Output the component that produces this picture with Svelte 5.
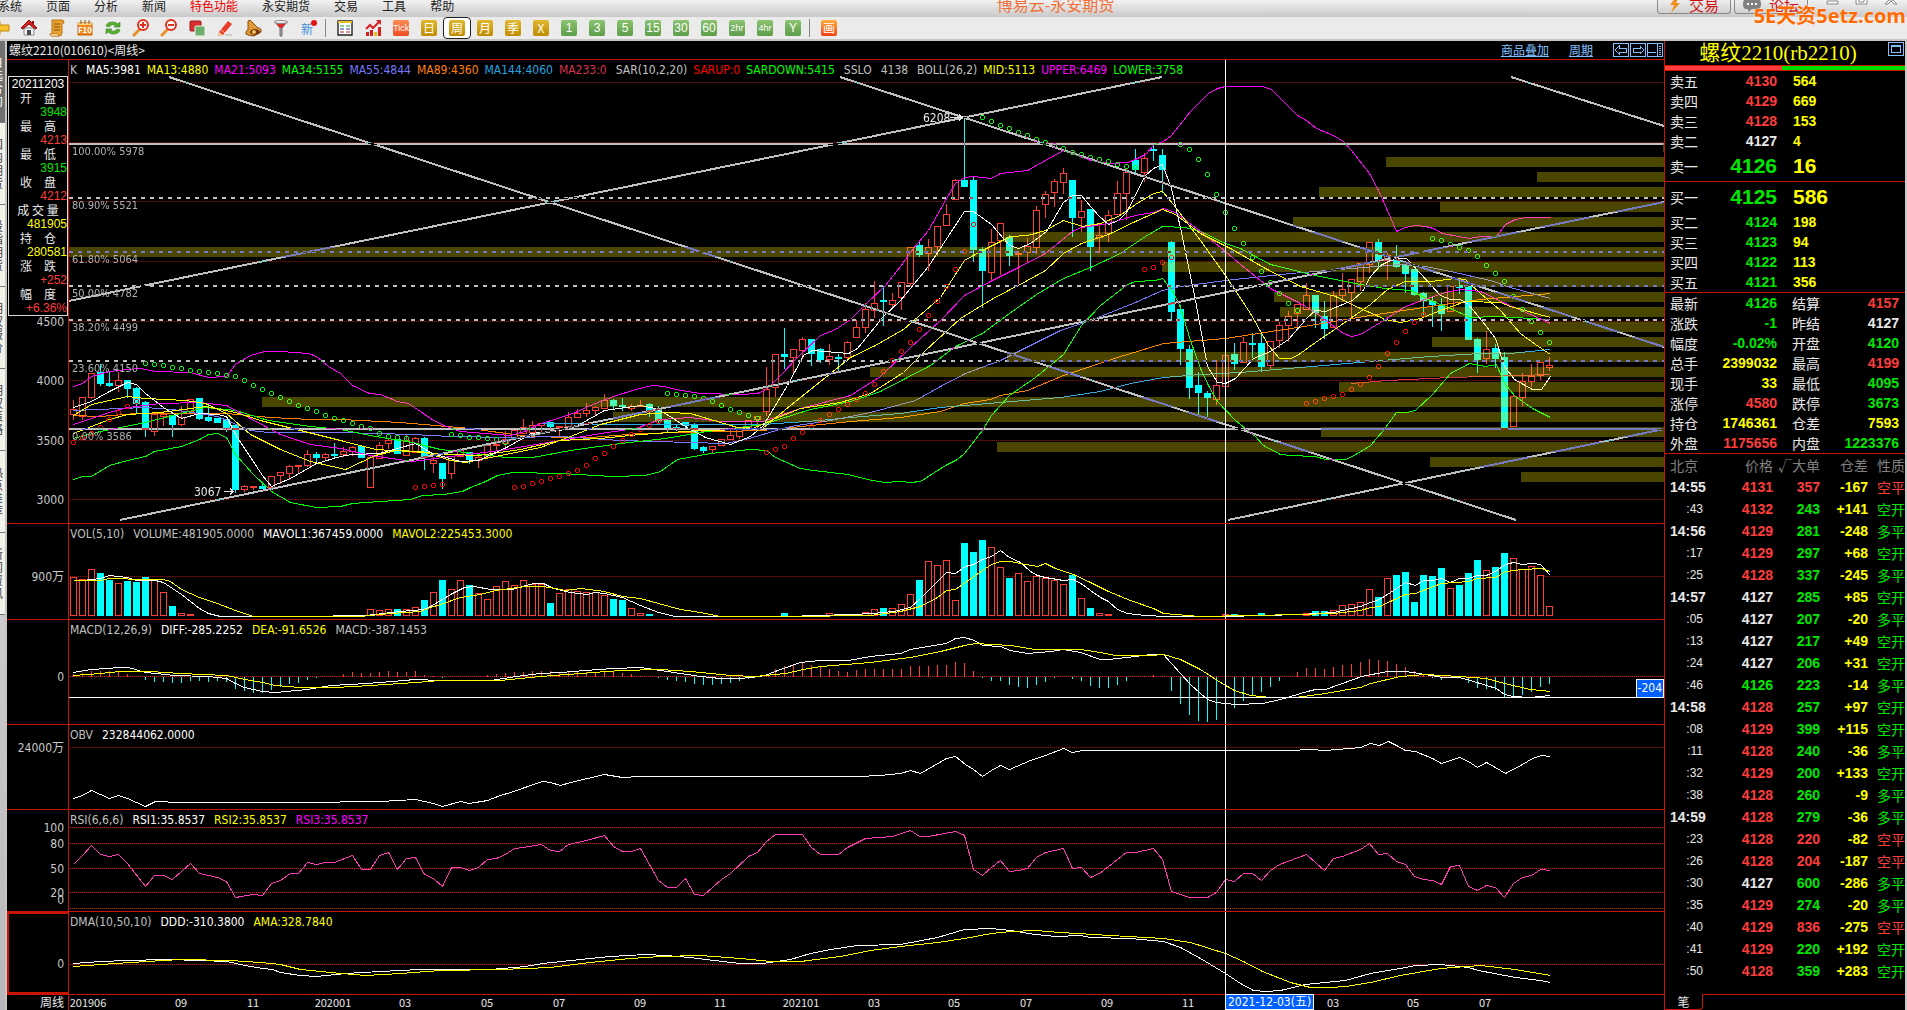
<script lang="ts">
  type Curve = { color: string; points: string };
  type Legend = { text: string; color: string; wide?: boolean };
  type Pane = {
    id: string;
    top: number;
    height: number;
    legend: Legend[];
    ticks: { y: number; text: string }[];
    curves: Curve[];
  };

  const LEFT = 69;
  const WIDTH = 1595;
  const CROSS_X = 1225;
  const barX = (i: number) => 73 + 9 * i;

  const menus = ["系统", "页面", "分析", "新闻", "特色功能", "永安期货", "交易", "工具", "帮助"];
  const tools = ["back", "home", "note", "f10", "refresh", "zoomin", "zoomout", "overlay", "pencil", "bell", "funnel", "new"];
  const periods = [
    { text: "Tick", kind: "red" },
    { text: "日", kind: "gold" },
    { text: "周", kind: "gold" },
    { text: "月", kind: "gold" },
    { text: "季", kind: "gold" },
    { text: "X", kind: "gold" },
    { text: "1", kind: "green" },
    { text: "3", kind: "green" },
    { text: "5", kind: "green" },
    { text: "15", kind: "green" },
    { text: "30", kind: "green" },
    { text: "60", kind: "green" },
    { text: "2hr", kind: "green" },
    { text: "4hr", kind: "green" },
    { text: "Y", kind: "green" },
  ];
  let activePeriod = $state("周");

  const sideTabs = ["自选合约", "国内期货", "股指期货", "期权报价", "期权策略", "热点推荐", "新闻资讯"];

  const info = [
    { label: "开　盘", value: "3948", tone: "down" },
    { label: "最　高", value: "4213", tone: "up" },
    { label: "最　低", value: "3915", tone: "down" },
    { label: "收　盘", value: "4212", tone: "up" },
    { label: "成 交 量", value: "481905", tone: "amount" },
    { label: "持　仓", value: "280581", tone: "amount" },
    { label: "涨　跌", value: "+252", tone: "up" },
    { label: "幅　度", value: "+6.36%", tone: "up" },
  ];

  // direction, high, body top, body bottom, low
  const candles = `u 399 409 414 419,u 397 397 416 419,u 372 373 397 398,d 363 372 383 385,d 370 383 385 386,u 371 380 385 391,
d 379 380 388 397,d 386 388 403 412,d 400 402 429 436,u 413 414 431 435,u 410 414 416 425,d 414 415 424 436,
u 405 417 424 425,u 398 399 411 413,d 398 398 418 419,d 403 417 420 421,d 418 418 422 422,d 419 419 428 431,
d 423 425 489 492,u 484 486 489 491,u 485 486 487 489,d 483 486 488 488,u 475 476 487 489,u 471 472 475 483,
u 464 466 473 479,u 464 465 466 472,u 449 454 465 466,d 451 454 457 463,u 452 454 457 460,d 442 454 455 457,
u 446 451 454 456,u 445 447 451 455,d 446 446 457 457,u 455 457 487 487,u 441 445 458 458,u 438 440 443 448,
d 439 439 453 453,u 434 440 455 455,u 436 438 452 452,d 436 438 457 469,u 456 460 463 472,d 463 463 478 488,
u 456 456 473 478,u 447 450 456 456,d 452 452 459 463,u 455 457 460 467,u 444 445 457 457,u 440 444 445 450,
u 430 439 443 446,u 429 430 438 438,u 418 427 433 433,u 420 425 432 435,u 423 423 425 433,d 421 422 426 428,
u 426 426 427 437,u 411 417 426 426,u 408 413 417 417,u 402 410 413 416,u 405 407 410 415,u 393 400 408 408,
d 398 400 405 408,d 397 405 406 410,u 403 406 408 410,u 399 405 406 406,d 402 404 411 416,d 405 409 420 424,
d 420 420 427 432,d 424 427 428 430,d 422 422 425 427,d 422 424 448 449,d 445 447 450 452,u 446 446 449 452,
u 439 439 445 445,u 429 435 439 439,u 428 428 436 438,u 420 420 430 430,u 416 416 419 429,u 366 389 411 415,
u 354 354 387 396,d 327 354 356 368,u 349 349 357 372,u 336 339 350 358,d 339 339 353 365,d 347 349 359 362,
u 343 356 359 364,d 353 357 358 371,u 340 342 357 359,u 319 327 337 337,u 302 309 327 332,u 280 303 310 317,
d 285 300 301 325,u 292 300 304 308,u 282 282 297 309,u 247 247 283 285,d 240 245 254 256,u 238 247 253 270,
u 226 226 246 255,u 203 214 225 225,u 178 180 199 199,d 118 180 186 186,d 176 180 249 261,d 246 249 270 307,
u 228 242 272 280,u 222 223 240 274,d 234 237 255 265,u 250 253 254 283,u 237 246 252 261,u 205 210 247 253,
u 190 194 204 217,u 178 181 192 206,u 167 173 182 193,d 180 180 217 236,u 199 211 217 231,d 209 209 246 270,
u 223 235 237 252,u 209 215 233 241,u 180 193 214 214,u 168 172 193 219,d 148 160 169 172,u 152 158 172 181,
d 145 149 150 160,d 148 155 169 192,d 240 242 311 320,d 304 309 348 364,d 344 349 387 398,d 371 385 392 415,
d 390 393 397 418,u 359 385 399 404,u 355 355 386 386,d 342 354 363 369,u 336 342 362 362,d 332 343 344 357,
d 332 343 366 371,u 341 341 365 369,u 321 325 340 347,u 310 316 325 341,u 304 304 313 326,u 282 295 309 309,
d 295 295 312 327,d 300 316 328 338,u 290 295 327 327,u 272 289 295 301,u 278 279 292 316,u 263 263 281 290,
u 242 242 264 272,d 238 242 259 268,u 252 255 260 279,d 244 259 266 267,d 263 265 273 292,d 269 269 294 295,
d 291 293 300 314,d 296 301 304 326,d 297 305 313 330,u 285 286 311 311,d 280 285 287 293,d 286 286 339 339,
d 337 339 359 372,u 330 349 358 363,d 343 348 358 367,d 351 357 429 429,u 394 396 426 426,u 372 381 397 405,
u 363 376 381 386,u 361 362 375 379,u 356 365 367 370`
    .split(",")
    .map((row, i) => {
      const [dir, high, top, bottom, low] = row.trim().split(" ");
      return { up: dir === "u", x: barX(i), high: +high, top: +top, bottom: +bottom, low: +low };
    });

  const FLAT_VOLUME = 615;
  const volumeRuns: [number, number[]][] = [
    [0, [577, 579, 569, 573, 580, 583, 581, 582, 577, 580, 592, 606, 613, 614]],
    [33, [609, 610, 609, 609, 609, 607, 600, 592, 580, 589, 580, 585, 593, 599, 586, 581, 585, 580, 584, 584, 603, 593, 589, 591, 592, 592, 595, 599, 600, 608, 613, 614]],
    [79, [613]],
    [84, [613]],
    [88, [612, 609, 608, 608, 604, 594, 580, 561, 565, 560, 600, 543, 552, 540, 547, 567, 578, 573, 581, 576, 578, 580, 584, 575, 598, 608, 613, 614]],
    [128, [614, 614]],
    [132, [613]],
    [137, [613, 611, 611, 610, 605, 604, 602, 589, 597, 578, 575, 572, 602, 575, 576, 568, 588, 585, 573, 560, 570, 567, 553, 558, 569, 566, 575, 606]],
  ];
  const volumes: number[] = candles.map(() => FLAT_VOLUME);
  for (const [start, tops] of volumeRuns) tops.forEach((top, k) => (volumes[start + k] = top));

  const histogram = [
    3, 4, 6, 6, 6, 5, 3, 0, -3, -5, -5, -6, -6, -4, -4, -5, -4, -5, -12, -14, -16, -16, -13, -10, -7, -6, -3, -1, 0, 1,
    3, 5, 4, 4, 5, 6, 5, 5, 6, 2, 1, -1, 0, 0, 0, 1, 2, 3, 4, 5, 5, 6, 6, 6, 5, 6, 5, 5, 5, 6,
    5, 4, 3, 1, 0, -1, -3, -4, -5, -7, -8, -8, -7, -6, -4, -2, 0, 3, 8, 11, 12, 14, 12, 10, 8, 6, 5, 7, 8, 8,
    8, 8, 8, 11, 11, 11, 12, 12, 15, 14, 6, -1, -4, -4, -8, -10, -11, -8, -5, -1, 0, -2, -4, -9, -11, -11, -8, -4, 0, 1,
    2, 1, -14, -27, -38, -44, -45, -43, -36, -31, -24, -18, -15, -10, -4, 0, 5, 9, 9, 8, 10, 12, 13, 15, 18, 17, 16, 13, 10, 6,
    3, -1, -3, -1, -1, -6, -11, -12, -13, -21, -21, -18, -15, -10, -7,
  ];

  const sarRuns: { color: string; start: number; ys: number[] }[] = [
    { color: "#00ff00", start: 8, ys: [363, 364, 365, 367, 368, 370, 371, 372, 373, 375, 376, 380, 385, 389, 393, 397, 401, 405, 408, 411, 415, 418, 420, 423, 426, 428, 433, 436, 437, 438] },
    { color: "#00ff00", start: 42, ys: [434, 435, 437, 437, 438, 439, 442] },
    { color: "#00ff00", start: 66, ys: [393, 394, 395, 396, 398, 401, 405, 409, 412, 415, 418] },
    { color: "#00ff00", start: 101, ys: [117, 121, 125, 128, 132, 135, 139, 142, 145, 148, 152, 154, 157, 159, 161, 164, 166, 167] },
    { color: "#00ff00", start: 123, ys: [144, 149, 159, 174, 194, 212, 228, 243, 257, 271, 282, 293, 303, 310] },
    { color: "#00ff00", start: 151, ys: [238, 240, 244, 247, 250, 256, 265, 273, 281, 296, 309, 321, 332, 342] },
    { color: "#ff0000", start: 0, ys: [442, 437, 433, 427, 419, 412, 406, 401] },
    { color: "#ff0000", start: 38, ys: [487, 486, 485, 484] },
    { color: "#ff0000", start: 49, ys: [487, 486, 483, 481, 478, 476, 473, 470, 465, 458, 453, 446, 440, 434, 429, 425, 421] },
    { color: "#ff0000", start: 77, ys: [452, 449, 446, 438, 432, 426, 420, 414, 409, 404, 399, 393, 384, 371, 360, 351, 342, 329, 315, 301, 286, 269, 251, 224] },
    { color: "#ff0000", start: 119, ys: [269, 267, 262, 257] },
    { color: "#ff0000", start: 137, ys: [403, 401, 398, 396, 394, 389, 384, 377, 366, 353, 342, 331, 322, 314] },
  ];

  // left edge of each price band, top to bottom, one band every 15 units
  const profile = [1663, 1386, 1537, 1319, 1440, 1293, 1003, 69, 1162, 1356, 1274, 1280, 1470, 1432, 1007, 870, 1339, 262, 613, 1321, 997, 1430, 1521];

  const trends = [
    [169, 77, 1516, 520],
    [840, 77, 1664, 347],
    [1511, 77, 1664, 126],
    [69, 301, 1162, 77],
    [120, 520, 1664, 202],
    [1228, 520, 1664, 429],
  ];

  const retracements = [
    { y: 144, text: "100.00% 5978", solid: true },
    { y: 198, text: "80.90% 5521", solid: false },
    { y: 252, text: "61.80% 5064", solid: false },
    { y: 286, text: "50.00% 4782", solid: false },
    { y: 320, text: "38.20% 4499", solid: false },
    { y: 361, text: "23.60% 4150", solid: false },
    { y: 429, text: "0.00% 3586", solid: true },
  ];

  const gridLines: Record<string, number[]> = {
    main: [82, 142, 201, 261, 321, 380, 440, 499],
    vol: [576],
    macd: [676],
    obv: [747],
    rsi: [827, 843, 868, 892, 908],
    dma: [964],
  };

  const panes: Pane[] = [
    {
      id: "main",
      top: 59,
      height: 464,
      legend: [
        { text: "K", color: "#c0c0c0" },
        { text: "MA5:3981", color: "#ffffff", wide: true },
        { text: "MA13:4880", color: "#ffff00" },
        { text: "MA21:5093", color: "#ff00ff" },
        { text: "MA34:5155", color: "#00ff00" },
        { text: "MA55:4844", color: "#7878ff" },
        { text: "MA89:4360", color: "#ff8000" },
        { text: "MA144:4060", color: "#22a6e0" },
        { text: "MA233:0", color: "#d83050" },
        { text: "SAR(10,2,20)", color: "#c0c0c0", wide: true },
        { text: "SARUP:0", color: "#ff0000" },
        { text: "SARDOWN:5415", color: "#00ff00" },
        { text: "SSLO", color: "#c0c0c0", wide: true },
        { text: "4138", color: "#c0c0c0", wide: true },
        { text: "BOLL(26,2)", color: "#c0c0c0", wide: true },
        { text: "MID:5113", color: "#ffff00" },
        { text: "UPPER:6469", color: "#ff00ff" },
        { text: "LOWER:3758", color: "#00ff00" },
      ],
      ticks: [
        { y: 322, text: "4500" },
        { y: 381, text: "4000" },
        { y: 441, text: "3500" },
        { y: 500, text: "3000" },
      ],
      curves: [
        { color: "#ff8000", points: "73,415 100,416 135,413 170,413 226,413 270,417 310,419 340,419 400,422 470,428 520,435 560,437 590,437 640,433 762,430 850,421 900,417 940,411 964,403 990,399 1000,395 1027,390 1063,375 1090,366 1117,357 1150,347 1163,343 1225,338 1310,325 1370,315 1430,306 1480,299 1550,293" },
        { color: "#30a8e0", points: "540,423 640,424 762,424 820,420 850,417 900,413 940,407 1000,402 1060,397 1100,391 1130,383 1163,377 1200,374 1240,372 1300,367 1370,361 1430,356 1480,353 1510,353 1550,349" },
        { color: "#d83050", points: "1351,383 1387,380 1450,377 1520,375 1550,374" },
        { color: "#7878ff", points: "73,410 145,407 172,409 217,416 250,430 268,432 340,432 412,434 450,436 510,437 560,436 620,440 690,442 725,443 745,439 790,426 830,420 870,412 915,400 940,386 965,373 1000,360 1030,345 1060,330 1090,320 1135,302 1162,290 1180,286 1225,280 1290,273 1400,264 1425,266 1450,271 1490,280 1510,287 1550,298" },
        { color: "#00ff00", points: "73,438 100,431 145,422 172,415 205,407 235,410 268,420 310,426 340,429 375,436 412,442 440,449 480,454 506,457 532,457 570,450 620,443 665,438 700,432 762,424 810,409 850,401 880,391 930,365 955,346 982,333 1009,313 1036,294 1063,278 1090,267 1118,254 1145,236 1162,226 1185,227 1200,231 1225,243 1240,248 1270,264 1315,275 1360,284 1385,288 1410,290 1430,300 1450,308 1470,317 1495,316 1550,319" },
        { color: "#ff00ff", points: "73,424 109,412 127,407 160,403 199,402 226,405 250,418 280,434 310,444 340,448 370,455 412,461 450,456 500,450 560,440 600,433 635,428 660,419 690,417 720,421 762,421 800,408 850,395 880,376 910,347 940,320 964,295 990,281 1018,267 1045,253 1072,231 1081,227 1108,223 1135,215 1153,212 1163,208 1175,212 1200,231 1225,251 1240,264 1270,288 1300,303 1315,312 1343,333 1351,336 1360,334 1380,322 1405,306 1430,297 1445,292 1460,289 1480,291 1505,303 1530,314 1550,323" },
        { color: "#ffff00", points: "73,433 109,419 127,414 160,412 205,406 235,412 260,420 300,430 340,440 375,449 410,451 450,454 478,455 520,449 560,440 600,438 640,434 700,430 750,429 775,418 800,408 840,402 870,393 903,372 925,350 960,318 991,299 1027,280 1045,270 1063,253 1081,243 1108,234 1135,221 1162,209 1175,214 1200,233 1230,248 1265,268 1300,286 1335,296 1360,308 1385,319 1400,322 1420,318 1440,310 1465,301 1500,302 1510,306 1550,317" },
        { color: "#ffff00", points: "73,415 91,404 127,396 145,398 185,400 205,403 226,413 250,434 280,449 310,461 345,469 375,455 395,450 422,451 450,460 465,462 490,457 540,447 570,436 600,424 640,414 668,412 690,413 710,419 737,427 762,428 790,405 850,357 875,345 903,329 918,316 940,297 964,260 982,250 1010,236 1027,235 1045,230 1063,220 1082,226 1100,223 1118,216 1135,204 1153,193 1162,191 1173,204 1200,240 1225,275 1250,313 1268,345 1279,358 1290,358 1297,355 1315,342 1340,325 1370,304 1387,289 1405,281 1430,281 1455,278 1465,279 1480,293 1500,310 1520,333 1535,344 1550,354" },
        { color: "#ff00ff", points: "73,386 82,383 91,376 109,371 127,369 140,368 155,371 190,372 208,377 226,376 235,364 250,355 264,351 280,351 308,353 316,356 328,366 340,373 352,385 369,393 380,394 397,401 408,403 420,411 430,418 443,425 460,431 485,433 510,435 524,431 538,424 560,417 575,412 590,405 613,396 635,389 652,385 664,386 675,389 700,393 740,394 757,393 766,389 780,375 796,358 820,335 835,329 850,319 865,304 885,285 900,266 913,248 928,230 945,200 955,183 964,177 973,176 991,178 1000,173 1027,170 1045,160 1063,150 1072,153 1090,160 1110,163 1127,162 1135,159 1145,154 1154,144 1163,141 1171,135 1190,111 1208,93 1217,88 1225,86 1262,86 1271,89 1280,98 1297,115 1306,120 1316,128 1333,135 1343,141 1351,150 1369,173 1378,190 1387,210 1396,231 1405,227 1415,225 1425,226 1433,228 1442,233 1458,236 1469,238 1480,236 1496,236 1505,224 1515,219 1525,217 1550,217" },
        { color: "#00ff00", points: "73,479 82,476 91,476 109,465 127,460 145,456 154,451 181,446 199,439 208,434 217,433 226,437 235,454 253,474 271,491 290,502 316,507 340,506 352,503 380,501 410,499 422,495 443,494 462,491 470,487 483,482 497,475 512,472 560,473 612,476 645,475 660,471 677,459 710,453 750,449 766,450 775,457 800,468 813,470 848,474 867,479 884,482 900,481 910,482 920,481 945,465 957,459 964,453 982,430 991,415 1009,395 1035,377 1063,354 1081,325 1100,305 1127,284 1135,281 1155,280 1162,278 1172,290 1180,307 1190,340 1200,368 1208,385 1217,401 1235,420 1245,428 1255,436 1263,445 1280,454 1290,455 1315,456 1325,459 1345,459 1352,456 1370,445 1383,430 1396,412 1406,412 1415,410 1432,394 1450,373 1469,363 1485,366 1496,364 1504,383 1515,396 1532,408 1550,417" },
        { color: "#ffffff", points: "73,407 91,401 109,391 127,382 136,384 145,393 163,407 181,418 199,413 217,414 226,416 235,434 262,475 271,486 290,478 316,463 340,456 352,454 379,453 415,443 432,453 460,461 478,460 506,447 531,433 560,430 579,424 604,410 640,405 655,408 668,415 685,426 705,437 730,444 750,436 763,425 787,385 803,355 812,350 848,353 857,348 883,316 900,300 928,266 964,211 973,211 991,224 1009,245 1018,248 1030,243 1046,231 1063,202 1072,195 1081,195 1090,206 1099,216 1108,224 1118,220 1126,212 1145,175 1153,168 1162,164 1171,188 1181,232 1195,300 1207,366 1217,382 1225,383 1235,378 1253,358 1270,351 1288,339 1307,317 1315,310 1325,311 1352,300 1362,291 1370,276 1380,265 1390,260 1400,258 1406,258 1420,273 1440,295 1450,299 1460,299 1468,304 1486,326 1495,338 1504,366 1514,379 1532,389 1541,389 1550,376" },
      ],
    },
    {
      id: "vol",
      top: 523,
      height: 96,
      legend: [
        { text: "VOL(5,10)", color: "#c0c0c0" },
        { text: "VOLUME:481905.0000", color: "#c0c0c0" },
        { text: "MAVOL1:367459.0000", color: "#ffffff" },
        { text: "MAVOL2:225453.3000", color: "#ffff00" },
      ],
      ticks: [{ y: 577, text: "900万" }],
      curves: [
        { color: "#ffffff", points: "73,580 82,580 100,578 109,575 127,577 136,580 155,580 163,582 181,594 199,608 208,613 220,616 300,616 365,615 400,611 424,609 432,605 450,594 464,587 474,586 490,589 512,589 525,585 534,583 543,583 553,588 570,592 586,594 595,592 604,593 622,597 640,605 658,612 675,616 785,616 850,614 873,613 893,611 910,607 920,598 937,581 946,572 955,573 965,566 973,564 982,559 991,556 1000,550 1009,557 1020,562 1030,571 1037,575 1045,577 1063,580 1073,579 1082,584 1090,590 1100,597 1108,601 1117,609 1127,613 1145,615 1165,616 1225,616 1300,614 1333,612 1360,606 1370,602 1379,599 1390,592 1405,582 1415,585 1423,580 1432,580 1441,578 1450,582 1459,578 1468,578 1477,575 1486,575 1495,571 1505,564 1513,562 1522,564 1532,563 1540,564 1550,575" },
        { color: "#ffff00", points: "73,580 100,580 109,578 145,579 163,579 170,581 181,589 199,597 217,603 235,610 253,616 360,616 390,613 420,611 430,607 440,604 460,597 480,594 495,590 510,588 525,586 542,586 555,588 565,590 580,588 604,591 622,596 640,598 658,603 680,609 700,612 720,616 790,616 870,615 900,611 920,606 937,597 946,590 955,589 965,582 982,570 991,564 1000,561 1010,561 1025,564 1037,566 1045,563 1055,568 1073,574 1090,582 1108,591 1130,600 1153,608 1163,613 1200,616 1300,614 1333,613 1360,610 1370,607 1379,606 1405,594 1415,593 1441,583 1468,581 1477,578 1495,577 1505,571 1522,569 1541,568 1550,571" },
      ],
    },
    {
      id: "macd",
      top: 619,
      height: 105,
      legend: [
        { text: "MACD(12,26,9)", color: "#c0c0c0" },
        { text: "DIFF:-285.2252", color: "#ffffff" },
        { text: "DEA:-91.6526", color: "#ffff00" },
        { text: "MACD:-387.1453", color: "#c0c0c0" },
      ],
      ticks: [{ y: 677, text: "0" }],
      curves: [
        { color: "#ffffff", points: "73,672 91,669 120,667 128,667 145,672 165,674 173,675 208,676 226,678 235,683 244,687 262,691 275,692 307,689 330,685 350,684 380,682 415,679 440,680 490,680 516,676 540,673 560,672 585,670 613,668 640,667 660,670 680,673 700,676 720,678 740,678 760,676 767,674 780,669 800,662 820,660 848,660 870,656 900,653 910,649 928,646 946,643 955,638 964,637 974,640 982,645 1000,646 1010,650 1027,653 1050,651 1063,649 1080,652 1100,659 1108,659 1135,656 1150,654 1163,654 1171,663 1190,684 1200,693 1207,699 1216,702 1235,704 1262,703 1280,699 1307,691 1315,689 1325,689 1342,683 1361,676 1387,671 1405,671 1425,674 1442,677 1459,677 1470,680 1486,685 1496,688 1504,694 1513,696 1530,697 1550,695" },
        { color: "#ffff00", points: "73,675 100,673 120,671 150,671 180,673 226,675 245,679 262,682 275,685 300,687 335,687 370,685 415,682 440,680 500,680 540,676 580,673 620,670 660,669 690,671 700,672 730,675 755,676 785,673 803,669 820,666 870,662 910,657 940,651 964,645 975,643 1010,645 1035,649 1080,649 1100,652 1115,655 1150,655 1163,654 1180,659 1200,669 1220,682 1234,690 1250,695 1270,697 1295,697 1325,693 1342,690 1360,687 1370,683 1400,676 1425,674 1459,676 1486,678 1504,683 1530,689 1550,691" },
      ],
    },
    {
      id: "obv",
      top: 724,
      height: 85,
      legend: [
        { text: "OBV", color: "#c0c0c0" },
        { text: "232844062.0000", color: "#ffffff" },
      ],
      ticks: [{ y: 748, text: "24000万" }],
      curves: [
        { color: "#ffffff", points: "73,798 82,795 91,790 109,798 118,795 127,798 145,806 155,801 180,802 300,802 380,801 415,799 433,803 442,806 460,801 469,803 487,800 500,795 510,792 542,781 550,782 560,785 570,782 604,774 622,777 640,776 857,776 880,775 900,773 910,770 920,773 946,758 955,756 965,764 973,769 982,776 991,770 1000,765 1009,769 1030,760 1045,755 1063,748 1072,752 1082,750 1225,750 1290,750 1310,749 1325,750 1360,747 1370,743 1379,745 1388,741 1396,745 1405,750 1415,751 1432,758 1441,763 1459,757 1468,761 1477,767 1486,762 1495,767 1505,773 1522,764 1532,758 1541,755 1550,756" },
      ],
    },
    {
      id: "rsi",
      top: 809,
      height: 102,
      legend: [
        { text: "RSI(6,6,6)", color: "#c0c0c0" },
        { text: "RSI1:35.8537", color: "#ffffff" },
        { text: "RSI2:35.8537", color: "#ffff00" },
        { text: "RSI3:35.8537", color: "#ff00ff" },
      ],
      ticks: [
        { y: 828, text: "100" },
        { y: 844, text: "80" },
        { y: 869, text: "50" },
        { y: 893, text: "20" },
        { y: 900, text: "0" },
      ],
      curves: [
        { color: "#ff3cb4", points: "73,864 82,855 91,845 100,854 109,856 118,854 127,863 145,886 154,875 163,875 172,879 190,863 199,873 208,875 217,877 226,881 235,897 253,894 262,895 271,883 280,880 290,873 298,873 307,862 316,864 325,862 334,862 352,855 361,869 370,869 379,855 388,852 397,869 406,858 415,857 424,874 433,878 442,886 451,867 460,867 469,870 478,867 487,859 496,858 505,854 514,848 523,847 541,844 550,850 559,851 568,844 586,840 604,835 613,846 622,851 631,851 640,848 658,880 667,887 676,887 685,878 694,894 703,895 721,879 730,873 748,856 757,852 766,841 775,834 802,834 811,847 820,854 838,854 847,847 865,838 892,836 910,830 919,836 928,836 955,831 964,835 973,869 982,875 991,867 1000,860 1009,871 1018,870 1027,868 1036,857 1045,852 1063,848 1072,868 1081,867 1090,877 1099,873 1117,859 1126,852 1135,852 1153,848 1162,859 1171,891 1189,897 1207,897 1216,892 1225,879 1234,881 1243,873 1252,873 1261,880 1270,870 1279,864 1306,854 1324,870 1333,858 1342,856 1360,849 1369,843 1378,854 1387,853 1396,861 1405,864 1414,876 1423,879 1432,880 1441,884 1450,866 1459,865 1468,886 1477,890 1486,885 1495,887 1504,897 1513,883 1522,877 1531,875 1540,869 1550,870" },
      ],
    },
    {
      id: "dma",
      top: 911,
      height: 83,
      legend: [
        { text: "DMA(10,50,10)", color: "#c0c0c0" },
        { text: "DDD:-310.3800", color: "#ffffff" },
        { text: "AMA:328.7840", color: "#ffff00" },
      ],
      ticks: [{ y: 965, text: "0" }],
      curves: [
        { color: "#ffffff", points: "73,963 100,961 127,960 165,959 200,960 226,961 245,965 262,968 272,969 280,972 300,975 316,976 345,973 380,971 420,969 490,969 525,966 542,963 580,959 610,956 645,954 665,955 690,957 705,959 740,963 762,963 790,959 810,953 830,949 857,945 900,944 937,937 964,929 991,928 1010,930 1035,934 1055,936 1080,935 1090,937 1130,938 1163,941 1180,947 1200,958 1225,973 1240,983 1253,990 1265,991 1280,990 1305,984 1345,980 1370,973 1400,968 1415,965 1440,964 1468,967 1478,970 1515,977 1540,980 1550,982" },
        { color: "#ffff00", points: "73,966 100,964 130,962 180,959 230,960 260,962 280,964 300,969 330,972 365,975 400,973 440,970 500,969 550,967 590,962 630,958 660,956 700,955 740,958 770,961 800,961 840,956 870,950 900,946 937,942 964,938 991,933 1010,931 1035,930 1060,932 1110,935 1163,938 1190,942 1225,953 1243,961 1262,971 1290,982 1310,987 1330,987 1345,986 1370,982 1400,975 1440,968 1480,965 1515,969 1550,975" },
      ],
    },
  ];

  const dates = [
    { x: 88, text: "201906" }, { x: 181, text: "09" }, { x: 253, text: "11" }, { x: 333, text: "202001" },
    { x: 405, text: "03" }, { x: 487, text: "05" }, { x: 559, text: "07" }, { x: 640, text: "09" },
    { x: 720, text: "11" }, { x: 801, text: "202101" }, { x: 874, text: "03" }, { x: 954, text: "05" },
    { x: 1026, text: "07" }, { x: 1107, text: "09" }, { x: 1188, text: "11" }, { x: 1333, text: "03" },
    { x: 1413, text: "05" }, { x: 1485, text: "07" },
  ];

  const asks = [["卖五", 4130, 564], ["卖四", 4129, 669], ["卖三", 4128, 153], ["卖二", 4127, 4], ["卖一", 4126, 16]] as const;
  const bids = [["买一", 4125, 586], ["买二", 4124, 198], ["买三", 4123, 94], ["买四", 4122, 113], ["买五", 4121, 356]] as const;

  const stats = [
    ["最新", "4126", "down", "结算", "4157", "up"],
    ["涨跌", "-1", "down", "昨结", "4127", "flat"],
    ["幅度", "-0.02%", "down", "开盘", "4120", "down"],
    ["总手", "2399032", "amount", "最高", "4199", "up"],
    ["现手", "33", "amount", "最低", "4095", "down"],
    ["涨停", "4580", "up", "跌停", "3673", "down"],
    ["持仓", "1746361", "amount", "仓差", "7593", "amount"],
    ["外盘", "1175656", "up", "内盘", "1223376", "down"],
  ];

  const trades: [string, number, number, string, string][] = [
    ["14:55", 4131, 357, "-167", "空平"],
    [":43", 4132, 243, "+141", "空开"],
    ["14:56", 4129, 281, "-248", "多平"],
    [":17", 4129, 297, "+68", "空开"],
    [":25", 4128, 337, "-245", "多平"],
    ["14:57", 4127, 285, "+85", "空开"],
    [":05", 4127, 207, "-20", "多平"],
    [":13", 4127, 217, "+49", "空开"],
    [":24", 4127, 206, "+31", "空开"],
    [":46", 4126, 223, "-14", "多平"],
    ["14:58", 4128, 257, "+97", "空开"],
    [":08", 4129, 399, "+115", "空开"],
    [":11", 4128, 240, "-36", "多平"],
    [":32", 4129, 200, "+133", "空开"],
    [":38", 4128, 260, "-9", "多平"],
    ["14:59", 4128, 279, "-36", "多平"],
    [":23", 4128, 220, "-82", "空平"],
    [":26", 4128, 204, "-187", "空平"],
    [":30", 4127, 600, "-286", "多平"],
    [":35", 4129, 274, "-20", "多平"],
    [":40", 4129, 836, "-275", "空平"],
    [":41", 4129, 220, "+192", "空开"],
    [":50", 4128, 359, "+283", "空开"],
  ];

  const PREV_SETTLE = 4127;
  function tone(price: number): string {
    if (price === PREV_SETTLE) return "flat";
    return price > PREV_SETTLE ? "up" : "down";
  }

  function percent(value: number, start: number, size: number): string {
    return `${((value - start) / size) * 100}%`;
  }
</script>

{#snippet toolIcon(name: string)}
  <svg class="icon" viewBox="0 0 18 18" width="18" height="18" aria-hidden="true">
    {#if name === "back"}
      <path d="M1 9 8 2v4h9v6H8v4z" fill="#f7c331" stroke="#c8860a" />
    {:else if name === "home"}
      <path d="M4 9h10v7H4z" fill="#f4f4f4" stroke="#888" />
      <path d="M12 2h2v4h-2z" fill="#a01010" />
      <path d="M9 1 1 9l2 1 6-5 6 5 2-1z" fill="#d42020" stroke="#8c1010" />
      <path d="M7 11h4v5H7z" fill="#4a4a4a" />
    {:else if name === "note"}
      <path d="M4 1h10q2 0 2 3h-2v10q0 3-3 3H4q-2 0-2-2h2z" fill="#e8a030" stroke="#b87410" />
      <path d="M6 5h6M6 8h6M6 11h6" stroke="#8c5408" />
      <path d="M2 15h8q0 2 1 2H4q-2 0-2-2z" fill="#fff0c8" stroke="#b87410" stroke-width=".6" />
    {:else if name === "f10"}
      <path d="M2 4h14v12H2z" fill="#f08a1c" stroke="#c06008" />
      <path d="M2 4h14v2H2z" fill="#ffd080" />
      <path d="M5 1v4M9 1v4M13 1v4" stroke="#886020" />
      <text x="9" y="14" text-anchor="middle" font-size="8" font-weight="bold" fill="#fff">F10</text>
    {:else if name === "refresh"}
      <path d="M2 7q1-4 7-4 3 0 5 2l2-2v5h-6l2-1q-4-3-7 1z" fill="#58b030" stroke="#2f7d18" stroke-width=".6" />
      <path d="M16 11q-1 4-7 4-3 0-5-2l-2 2v-5h6l-2 1q4 3 7-1z" fill="#58b030" stroke="#2f7d18" stroke-width=".6" />
    {:else if name === "zoomin" || name === "zoomout"}
      <path d="m8 10-6 6" stroke="#e8902c" stroke-width="3" stroke-linecap="round" />
      <circle cx="11" cy="6" r="5" fill="#fff" stroke="#e03020" stroke-width="2" />
      <path d="M8 6h6" stroke="#e03020" stroke-width="2" />
      {#if name === "zoomin"}<path d="M11 3v6" stroke="#e03020" stroke-width="2" />{/if}
    {:else if name === "overlay"}
      <rect x="2" y="2" width="11" height="10" rx="1" fill="#d83030" stroke="#a01818" />
      <rect x="7" y="7" width="10" height="10" rx="1" fill="#6cae6c" stroke="#e8f4e8" />
    {:else if name === "pencil"}
      <path d="m3 13 9-11 4 3-9 11-5 1z" fill="#e83c28" />
      <path d="m5 11 4 3" stroke="#ffb0a0" />
      <path d="m3 13 4 3-5 1z" fill="#f8d8a0" />
      <path d="M9 16h7" stroke="#aaa" />
    {:else if name === "bell"}
      <path d="M4 2q3-2 4 1l6 6q4 0 3 4l-7 4q-5 0-8-2-1-3 2-4z" fill="#e09a38" stroke="#8a4c10" />
      <ellipse cx="11" cy="13" rx="5" ry="3" fill="#7a3c0c" />
      <circle cx="10" cy="13" r="2" fill="#f4c060" />
    {:else if name === "funnel"}
      <path d="M3 3h12l-5 6v8H8V9z" fill="#a8a8a8" stroke="#686868" />
      <path d="M4 4h10l-4 5H8z" fill="#e02828" />
      <ellipse cx="9" cy="3" rx="7" ry="1.5" fill="#f0f0f0" stroke="#888" />
    {:else if name === "new"}
      <text x="7" y="15" text-anchor="middle" font-size="12" fill="#3c8ce0">新</text>
      <circle cx="14" cy="4" r="3" fill="#e81010" />
    {:else if name === "quote"}
      <path d="M2 2h14v14H2z" fill="#fff" stroke="#222" stroke-width="1.4" />
      <path d="M2 2h14v2H2z" fill="#e8c020" />
      <path d="M4 7h4M10 7h4" stroke="#20a020" />
      <path d="M4 10h4M10 10h4" stroke="#303090" />
      <path d="M4 13h4M10 13h4" stroke="#c02020" />
    {:else if name === "chart"}
      <path d="M2 17v-4h3v4zM6 17v-6h3v6zM14 17V8h3v9z" fill="#d82020" />
      <path d="M10 17v-4h3v4z" fill="#e8c020" />
      <path d="m2 10 4-4 3 3 7-7" fill="none" stroke="#d82020" stroke-width="2" />
      <path d="M12 1h5v5z" fill="#d82020" />
    {/if}
  </svg>
{/snippet}

{#snippet quoteRows(rows: readonly (readonly [string, number, number])[], best: string)}
  <table class="book">
    <tbody>
      {#each rows as [label, price, size] (label)}
        <tr class:best={label === best}>
          <th scope="row">{label}</th>
          <td class="num {tone(price)}">{price}</td>
          <td class="size amount">{size}</td>
        </tr>
      {/each}
    </tbody>
  </table>
{/snippet}

<div class="terminal">
  <header class="menubar">
    <nav class="menus" aria-label="主菜单">
      {#each menus as item (item)}
        <button type="button" class:hot={item === "特色功能"}>{item}</button>
      {/each}
    </nav>
    <span class="app-title">博易云-永安期货</span>
    <button type="button" class="head-btn">
      <svg viewBox="0 0 12 16" width="12" height="16" aria-hidden="true"><path d="M7 0 1 8h4l-3 8 9-10H7l3-6z" fill="#f0901c" /></svg>
      交易
    </button>
    <button type="button" class="head-btn">
      <svg viewBox="0 0 18 14" width="18" height="14" aria-hidden="true">
        <path d="M3 1h12q3 0 3 5t-3 5H9l-4 3v-3H3q-3 0-3-5t3-5z" fill="#808080" />
        <path d="M4 6h2M8 6h2M12 6h2" stroke="#fff" stroke-width="2" />
      </svg>
      论坛
    </button>
    <div class="window-btns">
      <button type="button" aria-label="最小化"><svg viewBox="0 0 14 10" width="14" height="10"><path d="M1 1h11v3H1z" fill="#fff" stroke="#888" /></svg></button>
      <button type="button" aria-label="还原"><svg viewBox="0 0 14 10" width="14" height="10"><path d="M1 0v4h11V0M4 0v2h5V0" fill="#fff" stroke="#888" /></svg></button>
      <button type="button" aria-label="关闭"><svg viewBox="0 0 14 10" width="14" height="10"><path d="M1 4h3l3-3 3 3h3L9 0H5z" fill="#fff" stroke="#888" /></svg></button>
    </div>
    <span class="brand">5E天资5etz.com</span>
  </header>

  <div class="toolbar">
    {#each tools as tool (tool)}
      <button type="button" class="tool" aria-label={tool}>{@render toolIcon(tool)}</button>
    {/each}
    <span class="sep"></span>
    <button type="button" class="tool" aria-label="quote">{@render toolIcon("quote")}</button>
    <button type="button" class="tool" aria-label="chart">{@render toolIcon("chart")}</button>
    {#each periods as period (period.text)}
      <button type="button" class="tool" class:active={activePeriod === period.text} onclick={() => (activePeriod = period.text)}>
        <span class="chip {period.kind}" class:small={period.text.length > 2}>{period.text}</span>
      </button>
    {/each}
    <span class="sep"></span>
    <button type="button" class="tool"><span class="chip paint">画</span></button>
  </div>

  <div class="workspace">
    <nav class="side-tabs" aria-label="板块">
      {#each sideTabs as tab, i (tab)}
        <button type="button" class:current={i === 0}><span>{tab}</span></button>
      {/each}
    </nav>

    <main class="chart">
      <div class="chart-head">
        <span>螺纹2210(010610)&lt;周线&gt;</span>
        <div class="chart-links">
          <a href="#overlay">商品叠加</a>
          <a href="#period">周期</a>
          <div class="chart-btns">
            <button type="button" aria-label="左移"><svg viewBox="0 0 14 12" width="14" height="12"><path d="m1 6 4-4v2h7v4H5v2z" /></svg></button>
            <button type="button" aria-label="右移"><svg viewBox="0 0 14 12" width="14" height="12"><path d="M13 6 9 2v2H2v4h7v2z" /></svg></button>
            <button type="button" aria-label="布局"><svg viewBox="0 0 14 12" width="14" height="12"><path d="M0 8h8M9 0v12M11 2h2M11 4h2M11 6h2M11 8h2M11 10h2" /></svg></button>
          </div>
        </div>
      </div>

      {#each panes as pane (pane.id)}
        <section class="pane" style:flex-grow={pane.height - 1}>
          <div class="axis" class:selected={pane.id === "dma"}>
            {#if pane.id === "main"}
              <dl class="info">
                <div class="info-date">20211203</div>
                {#each info as row (row.label)}
                  <dt>{row.label}</dt>
                  <dd class={row.tone}>{row.value}</dd>
                {/each}
              </dl>
            {/if}
            {#each pane.ticks as tick (tick.text)}
              <span class="tick" style:top={percent(tick.y, pane.top + 1, pane.height - 1)}>{tick.text}</span>
            {/each}
          </div>
          <div class="plot">
            <svg viewBox="{LEFT} {pane.top + 1} {WIDTH} {pane.height - 1}" preserveAspectRatio="none" aria-hidden="true">
              <g transform="translate(0.5 0.5)">
                {#each gridLines[pane.id] as y (y)}
                  <path class="grid" class:bright={pane.id !== "main" && pane.id !== "vol" && pane.id !== "obv"} d="M{LEFT} {y}H1664" />
                {/each}

                {#if pane.id === "main"}
                  {#each candles as c (c.x)}
                    <g class={c.up ? "rise" : "fall"}>
                      <path d="M{c.x} {c.high}V{c.top}M{c.x} {c.bottom}V{c.low}" />
                      <rect x={c.x - 3} y={c.top} width="6" height={c.bottom - c.top} />
                    </g>
                  {/each}
                {:else if pane.id === "vol"}
                  {#each candles as c, i (c.x)}
                    <rect class={c.up ? "rise" : "fall"} x={c.x - 3} y={volumes[i]} width="6" height={615 - volumes[i]} />
                  {/each}
                {:else if pane.id === "macd"}
                  {#each histogram as value, i (i)}
                    {#if value !== 0}
                      <path class={value > 0 ? "rise" : "fall"} d="M{barX(i)} 676V{676 - value}" />
                    {/if}
                  {/each}
                {/if}

                {#each pane.curves as curve (curve.points)}
                  <polyline class="curve" points={curve.points} stroke={curve.color} />
                {/each}

                {#if pane.id === "main"}
                  {#each sarRuns as run (run.color + run.start)}
                    {#each run.ys as y, k (k)}
                      <circle cx={barX(run.start + k)} cy={y} r="2" stroke={run.color} />
                    {/each}
                  {/each}
                {/if}
              </g>

              {#if pane.id === "main"}
                <g class="profile">
                  {#each profile as x, i (i)}
                    <rect {x} y={142 + 15 * i} width={1664 - x} height="10" />
                  {/each}
                </g>
                <g class="drawings">
                  {#each retracements as line (line.y)}
                    <path class:dashed={!line.solid} d="M{LEFT} {line.y}H1664" />
                  {/each}
                  {#each trends as [x1, y1, x2, y2] (x1 + y1)}
                    <path d="M{x1} {y1}L{x2} {y2}" />
                  {/each}
                </g>
                {#each retracements as line (line.y)}
                  <text class="level" x="72" y={line.y + 11}>{line.text}</text>
                {/each}
                <text class="extreme" x="194" y="496">3067</text>
                <path class="pointer" d="M224 491.5h9M230 488.5l3 3-3 3" />
                <text class="extreme" x="923" y="122">6208</text>
                <path class="pointer" d="M950 117.5h12M959 114.5l3 3-3 3" />
              {:else if pane.id === "macd"}
                <path class="cross" d="M{LEFT} 697.5H1664" />
              {/if}
              <path class="cross" d="M{CROSS_X + 0.5} {pane.top}v{pane.height}" />
            </svg>
            <div class="legend" class:dense={pane.id === "main"}>
              {#each pane.legend as item (item.text)}
                <span class:wide={item.wide} style:color={item.color}>{item.text}</span>
              {/each}
            </div>
            {#if pane.id === "macd"}
              <output class="value-tag">-204</output>
            {/if}
          </div>
        </section>
      {/each}

      <footer class="date-row">
        <span class="period-name">周线</span>
        <div class="dates">
          {#each dates as date (date.x)}
            <span style:left={percent(date.x, LEFT, WIDTH)}>{date.text}</span>
          {/each}
          <output style:left={percent(CROSS_X, LEFT, WIDTH)}>2021-12-03(五)</output>
        </div>
      </footer>
    </main>

    <aside class="quote">
      <h1>
        螺纹2210(rb2210)
        <button type="button" aria-label="最大化"><svg viewBox="0 0 16 14" width="16" height="14"><path d="M.5.5h15v13H.5zM3.5 3.5h9v7h-9zM3.5 4.5h9" /></svg></button>
      </h1>
      <div class="ratio"><span></span><span></span></div>
      {@render quoteRows(asks, "卖一")}
      {@render quoteRows(bids, "买一")}

      <table class="stats">
        <tbody>
          {#each stats as [l1, v1, t1, l2, v2, t2] (l1)}
            <tr>
              <th scope="row">{l1}</th>
              <td class={t1}>{v1}</td>
              <th scope="row">{l2}</th>
              <td class={t2}>{v2}</td>
            </tr>
          {/each}
        </tbody>
      </table>

      <table class="trades">
        <thead>
          <tr><th scope="col">北京</th><th scope="col">价格</th><th scope="col">√大单</th><th scope="col">仓差</th><th scope="col">性质</th></tr>
        </thead>
        <tbody>
          {#each trades as [time, price, size, change, kind], i (i)}
            {@const side = kind === "空平" ? "up" : "down"}
            <tr>
              <td class:second={time.startsWith(":")}>{time}</td>
              <td class={tone(price)}>{price}</td>
              <td class={side}>{size}</td>
              <td class="amount">{change}</td>
              <td class={side}>{kind}</td>
            </tr>
          {/each}
        </tbody>
      </table>

      <div class="bottom-tabs"><button type="button">笔</button></div>
    </aside>
  </div>
</div>

<style>
  :global(body) {
    margin: 0;
    background: #000;
    overflow: hidden;
  }

  .terminal {
    --red: #c81400;
    --tahoma: "DejaVu Sans Condensed", "Noto Sans", "Noto Sans CJK SC", sans-serif;
    display: flex;
    flex-direction: column;
    height: 100vh;
    min-height: 900px;
    background: #000;
    color: #e8e8e8;
    font: 12px/14px "Noto Sans CJK SC", sans-serif;
  }

  button {
    margin: 0;
    padding: 0;
    border: 0;
    background: none;
    color: inherit;
    font: inherit;
    cursor: pointer;
  }

  .menubar {
    position: relative;
    display: flex;
    height: 17px;
    flex: none;
    overflow: visible;
    background: linear-gradient(#f2f2f2, #c9c9c9);
    color: #222;
  }

  .menus {
    display: flex;
    gap: 24px;
    height: 17px;
    margin-left: -2px;
  }

  .menus button {
    height: 11px;
    line-height: 11px;
    white-space: nowrap;
  }

  .menus .hot {
    color: #f00000;
  }

  .app-title {
    margin: 0 auto;
    color: #f07038;
    font-size: 16px;
    line-height: 9px;
  }

  .head-btn {
    display: flex;
    align-items: center;
    justify-content: center;
    gap: 8px;
    width: 74px;
    height: 14px;
    margin-right: 3px;
    padding-bottom: 3px;
    box-sizing: border-box;
    border: 1px solid #888;
    border-top: 0;
    border-radius: 0 0 4px 4px;
    background: linear-gradient(#eee, #d0d0d0);
    color: #d01010;
    font-size: 15px;
    line-height: 10px;
    overflow: hidden;
  }

  .window-btns {
    display: flex;
    gap: 15px;
    margin: 0 9px 0 15px;
    align-items: flex-start;
  }

  .window-btns svg {
    display: block;
  }

  .brand {
    position: absolute;
    top: 4px;
    right: 1px;
    z-index: 1;
    color: #ff6a00;
    font: bold 20px/24px "Open Sans", "Noto Sans CJK SC", sans-serif;
    text-shadow: 0 0 2px #fff;
  }

  .toolbar {
    display: flex;
    align-items: center;
    height: 22px;
    flex: none;
    border-bottom: 2px solid #c8c4c0;
    background: #ebebeb;
  }

  .tool {
    display: flex;
    align-items: center;
    justify-content: center;
    width: 28px;
    height: 22px;
    flex: none;
    box-sizing: border-box;
  }

  .tool:first-child {
    margin-left: -13px;
  }

  .tool.active {
    border: 1px solid #222;
    border-radius: 4px;
    background: #fff;
  }

  .icon {
    display: block;
  }

  .sep {
    width: 8px;
    height: 18px;
    box-sizing: border-box;
    background: linear-gradient(#888, #888) 2px 0 / 1px 100% no-repeat;
  }

  .chip {
    width: 16px;
    height: 16px;
    border-radius: 2px;
    color: #fff;
    font-size: 12px;
    line-height: 15px;
    text-align: center;
    overflow: hidden;
  }

  .chip.red {
    background: linear-gradient(#ff8a50, #f04c20);
    font: 12px/16px "Liberation Sans", sans-serif;
  }

  .chip.gold {
    background: linear-gradient(#e0b830, #c08c00);
  }

  .chip.green {
    background: linear-gradient(#8cc470, #5c9c48);
    font: 12px/16px "Liberation Sans", sans-serif;
  }

  .chip.small {
    font-size: 9px;
  }

  .chip.paint {
    background: linear-gradient(#ffb040, #f04010);
  }

  .workspace {
    display: flex;
    flex: 1;
    min-height: 0;
    border-right: 2px solid #c8c8c8;
  }

  .side-tabs {
    width: 7px;
    flex: none;
    box-sizing: border-box;
    border-right: 2px solid #c8c4c0;
    background: linear-gradient(#e8e8e8, #b8b8bc);
    overflow: hidden;
  }

  .side-tabs button {
    display: flex;
    justify-content: flex-end;
    width: 5px;
    height: 82px;
    padding: 14px 2px 0 0;
    box-sizing: border-box;
    border-bottom: 1px solid #777;
    background: #f2f1ea;
    color: #444;
    overflow: hidden;
  }

  .side-tabs .current {
    background: #707070;
    color: #fff;
  }

  .side-tabs span {
    width: 12px;
    flex: none;
    height: 52px;
    line-height: 13px;
    word-break: break-all;
    white-space: normal;
  }

  .chart {
    display: flex;
    flex: 1;
    flex-direction: column;
    min-width: 0;
    border-right: 1px solid var(--red);
  }

  .chart-head {
    display: flex;
    align-items: center;
    justify-content: space-between;
    height: 18px;
    flex: none;
    padding: 0 1px 0 2px;
  }

  .chart-links {
    display: flex;
    align-items: center;
    gap: 20px;
  }

  .chart-links a {
    color: #80c0ff;
  }

  .chart-btns {
    display: flex;
    gap: 1px;
  }

  .chart-btns button {
    width: 16px;
    height: 14px;
    box-sizing: border-box;
    border: 1px solid #80c0ff;
  }

  .chart-btns svg,
  h1 svg {
    display: block;
    fill: none;
    stroke: #80c0ff;
    shape-rendering: crispEdges;
  }

  .pane {
    display: flex;
    flex-shrink: 0;
    flex-basis: 0;
    min-height: 0;
    box-sizing: border-box;
    border-top: 1px solid var(--red);
  }

  .axis {
    position: relative;
    width: 62px;
    flex: none;
    box-sizing: border-box;
    border-right: 1px solid var(--red);
  }

  .axis.selected {
    border: 2px solid var(--red);
    border-right-width: 1px;
  }

  .tick {
    position: absolute;
    right: 4px;
    margin-top: -7px;
    color: #c8c8c8;
    font-family: var(--tahoma);
    line-height: 14px;
  }

  .info {
    width: 60px;
    margin: 16px 0 0 1px;
    box-sizing: border-box;
    border: 1px solid #d8d8d8;
    line-height: 14px;
    text-align: center;
  }

  .info-date {
    font-family: "Liberation Sans", sans-serif;
    color: #fff;
  }

  .info dt {
    white-space: nowrap;
  }

  .info dd {
    margin: 0;
    font-family: "Liberation Sans", sans-serif;
    text-align: right;
  }

  .plot {
    position: relative;
    display: grid;
    flex: 1;
    min-width: 0;
    min-height: 0;
  }

  .plot svg {
    grid-area: 1 / 1;
    display: block;
    width: 100%;
    height: 100%;
    min-height: 0;
    background: #000;
    isolation: isolate;
    shape-rendering: crispEdges;
  }

  .grid {
    stroke: #a00000;
    stroke-dasharray: 1 1;
  }

  .grid.bright {
    stroke: #e01800;
  }

  .rise {
    fill: #000;
    stroke: #ff3c32;
  }

  .fall {
    fill: #00ffff;
    stroke: #00ffff;
  }

  .curve,
  circle {
    fill: none;
  }

  .icon circle {
    fill: revert-layer;
  }

  .profile {
    fill: #fff000;
    opacity: 0.29;
  }

  .drawings path {
    stroke: #c0c0c0;
    stroke-width: 2px;
    mix-blend-mode: difference;
  }

  .drawings .dashed {
    stroke-dasharray: 4 5;
  }

  .level {
    fill: #b0b0b0;
    font: 11px var(--tahoma);
  }

  .extreme {
    fill: #e8e8e8;
    font: 12px var(--tahoma);
  }

  .pointer {
    fill: none;
    stroke: #e8e8e8;
  }

  .cross {
    stroke: #fff;
  }

  .legend {
    grid-area: 1 / 1;
    z-index: 1;
    display: flex;
    gap: 9px;
    height: 20px;
    padding-left: 1px;
    font-family: var(--tahoma);
    line-height: 20px;
    white-space: nowrap;
  }

  .legend.dense {
    gap: 6px;
  }

  .legend .wide {
    margin-left: 3px;
  }

  .value-tag {
    position: absolute;
    top: 59px;
    right: 0;
    z-index: 2;
    padding: 0 1px;
    border: 1px solid #fff;
    background: #0060ff;
    color: #fff;
    font-family: var(--tahoma);
    line-height: 17px;
  }

  .date-row {
    display: flex;
    height: 16px;
    flex: none;
    box-sizing: border-box;
    border-top: 1px solid var(--red);
    line-height: 14px;
  }

  .period-name {
    width: 62px;
    flex: none;
    box-sizing: border-box;
    padding-right: 4px;
    border-right: 1px solid var(--red);
    text-align: right;
  }

  .dates {
    position: relative;
    flex: 1;
  }

  .dates span {
    position: absolute;
    top: 0;
    transform: translateX(-50%);
    font-family: "Noto Sans CJK SC", sans-serif;
    font-size: 11px;
  }

  .dates output {
    position: absolute;
    top: -1px;
    padding: 0 2px;
    border: 1px solid #fff;
    background: #0060ff;
    color: #fff;
    font-family: var(--tahoma);
    line-height: 14px;
    white-space: nowrap;
  }

  .quote {
    display: flex;
    flex-direction: column;
    width: 240px;
    flex: none;
    font-size: 14px;
  }

  h1 {
    position: relative;
    height: 24px;
    flex: none;
    margin: 0;
    padding-right: 14px;
    color: #ffff00;
    font: 21px/24px "Liberation Serif", "Noto Sans CJK SC", serif;
    text-align: center;
  }

  h1 button {
    position: absolute;
    top: 1px;
    right: 1px;
  }

  .ratio {
    display: flex;
    height: 4px;
    flex: none;
    border-top: 1px solid var(--red);
    border-bottom: 1px solid var(--red);
  }

  .ratio span {
    flex: 122;
    background: #00e000;
  }

  .ratio span:first-child {
    flex: 117;
    background: #ff3c3c;
  }

  table {
    width: 100%;
    flex: none;
    table-layout: fixed;
    border-collapse: collapse;
    line-height: 20px;
  }

  th,
  td {
    padding: 0;
    white-space: nowrap;
  }

  th {
    font-weight: normal;
    text-align: left;
  }

  td {
    font: bold 14px/20px "Liberation Sans", sans-serif;
    text-align: right;
  }

  tr {
    height: 20px;
  }

  .book,
  .stats {
    border-bottom: 1px solid var(--red);
    border-collapse: separate;
    border-spacing: 0;
  }

  .book th,
  .stats th {
    width: 43px;
    padding-left: 5px;
    box-sizing: border-box;
  }

  .book .num {
    width: 69px;
  }

  .book td.size {
    padding-left: 16px;
    text-align: left;
  }

  .book .best {
    height: 30px;
  }

  .best td {
    font-size: 21px;
    line-height: 30px;
  }

  .stats th + td {
    width: 69px;
  }

  .stats td + th {
    width: 53px;
    padding-left: 15px;
  }

  .stats td:last-child {
    width: auto;
    padding-right: 6px;
  }

  .up {
    color: #ff3c3c;
  }

  .down {
    color: #00e600;
  }

  .flat {
    color: #e8e8e8;
  }

  .amount {
    color: #ffff00;
  }

  .trades tr {
    height: 22px;
  }

  .trades th {
    color: #808080;
    text-align: right;
  }

  .trades th:first-child,
  .trades td:first-child {
    width: 46px;
    padding-left: 5px;
    text-align: left;
  }

  .trades th:nth-child(2) {
    width: 57px;
  }

  .trades th:nth-child(3) {
    width: 47px;
  }

  .trades th:nth-child(4) {
    width: 48px;
  }

  .trades td.second {
    padding: 0 13px 0 0;
    font: 12px/20px "Liberation Sans", sans-serif;
    text-align: right;
  }

  .trades td:last-child {
    font: 14px/20px "Noto Sans CJK SC", sans-serif;
  }

  .bottom-tabs {
    display: flex;
    height: 16px;
    flex: none;
    margin-top: auto;
  }

  .bottom-tabs::after {
    flex: 1;
    border-top: 1px solid var(--red);
    content: "";
  }

  .bottom-tabs button {
    width: 38px;
    border-right: 1px solid var(--red);
    border-bottom: 1px solid var(--red);
    border-radius: 0 0 4px 2px;
    font-size: 12px;
    line-height: 14px;
  }
</style>
